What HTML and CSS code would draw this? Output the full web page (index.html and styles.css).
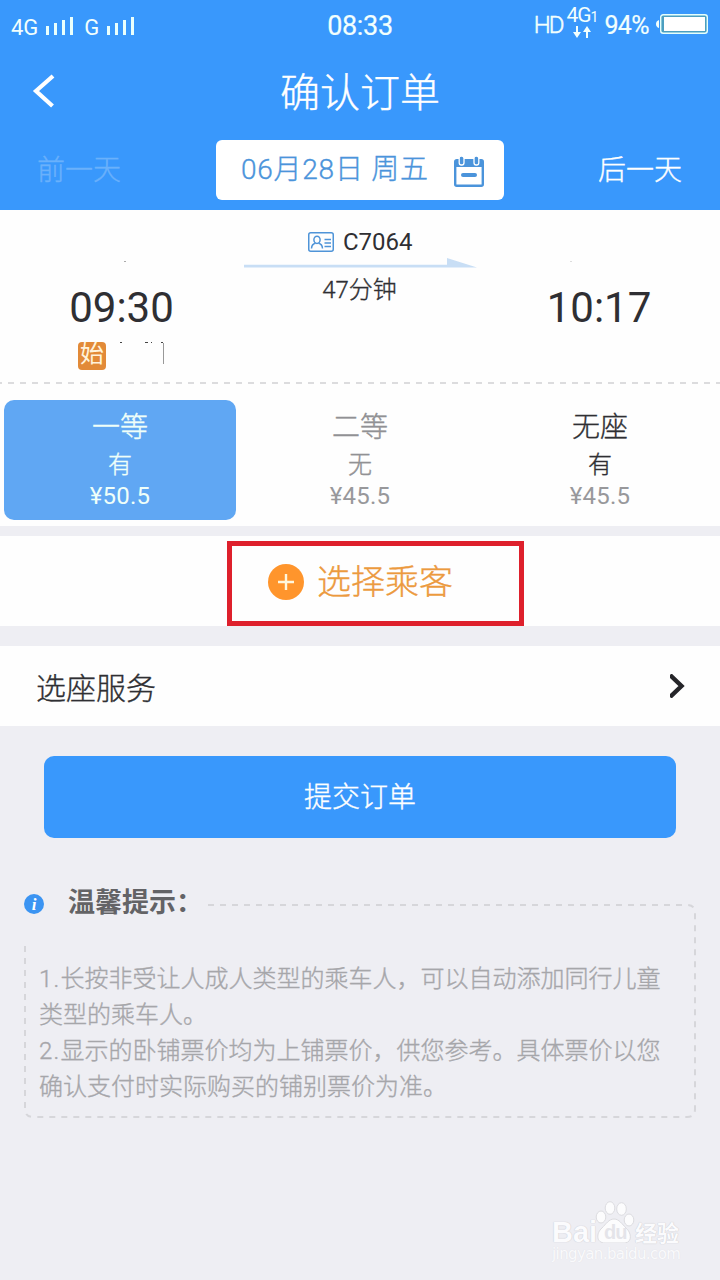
FILE: index.html
```html
<!DOCTYPE html>
<html lang="zh-CN">
<head>
<meta charset="utf-8">
<title>确认订单</title>
<link rel="stylesheet" href="styles.css">
</head>
<body>
<div class="screen">
  <header class="header">
    <div class="status">
      <div class="status-left">
        <span>4G</span>
        <svg class="signal" width="28" height="18" viewBox="0 0 28 18"><path d="M1.500 9v9M9.500 6v12M17.500 3v15M25.500 0v18"/></svg>
        <span class="net2">G</span>
        <svg class="signal" width="28" height="18" viewBox="0 0 28 18"><path d="M1.500 9v9M9.500 6v12M17.500 3v15M25.500 0v18"/></svg>
      </div>
      <div class="clock">08:33</div>
      <div class="status-right">
        <span class="hd">HD</span>
        <div class="data">
          <div class="data-label">4G<small>1</small></div>
          <svg width="20" height="13" viewBox="0 0 20 13"><path d="M5 0v7M15 12V5" stroke="#f2fffd" stroke-width="2"/><path d="M1 6h8l-4 6zM11 6h8l-4-6z" fill="#f2fffd"/></svg>
        </div>
        <span class="pct">94%</span>
        <svg class="battery" width="53" height="20" viewBox="0 0 53 20"><path d="M3 6v8q-3-1-3-4t3-4z" fill="#f2fffd"/><rect x="4.700" y=".7" width="46.600" height="18.600" rx="2.500" fill="#4b9fc0" stroke="#e5fffc" stroke-width="1.400"/><rect x="8" y="3" width="41" height="14" fill="#fff"/></svg>
      </div>
    </div>
    <div class="titlebar">
      <svg class="back" width="24" height="34" viewBox="0 0 24 34"><path d="M21 2L4 17l16.500 15" fill="none" stroke="#fff" stroke-width="4.200"/></svg>
      <h1>确认订单</h1>
    </div>
    <div class="dates">
      <div class="day prev">前一天</div>
      <div class="picker">
        <span>06月28日 周五</span>
        <svg width="30" height="30" viewBox="0 0 30 30"><rect x="1.200" y="3.200" width="27.600" height="25.600" rx="1.500" fill="#fff" stroke="#4b94db" stroke-width="2.400"/><path d="M1 3h28v7H1z" fill="#4b94db"/><rect x="5.200" y="-1" width="4.800" height="9" rx="2.200" fill="#4b94db" stroke="#fff" stroke-width="1.300"/><rect x="20" y="-1" width="4.800" height="9" rx="2.200" fill="#4b94db" stroke="#fff" stroke-width="1.300"/><path d="M9 18h12" stroke="#4b94db" stroke-width="4" stroke-linecap="round"/></svg>
      </div>
      <div class="day">后一天</div>
    </div>
  </header>

  <section class="trip">
    <div class="stop">
      <i class="speck"></i>
      <div class="time">09:30</div>
      <div class="origin">
        <span class="badge">始</span>
        <svg width="48" height="24" viewBox="0 0 48 24"><path d="M2 .5h2M27 .5h3M33 .5h1M43 .5h2" stroke="#444" stroke-width="1"/><path d="M45.500 1v21" stroke="#999"/></svg>
      </div>
    </div>
    <div class="route">
      <div class="train">
        <svg width="26" height="20" viewBox="0 0 26 20" fill="none" stroke="#4f94d8" stroke-width="1.500"><rect x=".75" y=".75" width="24.500" height="18.500" rx="2"/><ellipse cx="9" cy="7.800" rx="3.100" ry="3.600"/><path d="M3.500 16.500q.3-4.500 4-5.200M10.500 11.300q3.700.7 4 5.200M16.500 7.500H23M16.500 11H23M16.500 14.500H23"/></svg>
        <span>C7064</span>
      </div>
      <svg class="arrow" width="234" height="10" viewBox="0 0 234 10"><path d="M0 6.800h203V0l30 9.600H0z" fill="#c8def5"/></svg>
      <div class="duration">47分钟</div>
    </div>
    <div class="stop">
      <i class="speck faint"></i>
      <div class="time">10:17</div>
    </div>
  </section>
  <svg class="divider" width="720" height="2"><path d="M-4 1h728" stroke="#dcdcde" stroke-width="2" stroke-dasharray="6 6"/></svg>

  <section class="seats">
    <div class="seat selected"><b>一等</b><span>有</span><em>¥50.5</em></div>
    <div class="seat soldout"><b>二等</b><span>无</span><em>¥45.5</em></div>
    <div class="seat"><b>无座</b><span>有</span><em>¥45.5</em></div>
  </section>

  <section class="passenger">
    <div class="highlight">
      <svg width="36" height="36" viewBox="0 0 36 36"><circle cx="18" cy="18" r="18" fill="#ff952c"/><path d="M10 18h16M18 10v16" stroke="#fff7dd" stroke-width="2.400"/></svg>
      <span>选择乘客</span>
    </div>
  </section>

  <section class="service">
    <span>选座服务</span>
    <svg width="15" height="24" viewBox="0 0 15 24"><path d="M0 1l11.500 11L0 23" fill="none" stroke="#252529" stroke-width="4.400"/></svg>
  </section>

  <div class="submit">提交订单</div>

  <section class="tips">
    <svg class="tips-frame" width="672" height="214" viewBox="0 0 672 214" fill="none" stroke="#d6d6da" stroke-width="2" stroke-dasharray="6 6"><path d="M184 1h479q8 0 8 8v196q0 8-8 8H9q-8 0-8-8V38"/></svg>
    <div class="tips-head">
      <svg width="20" height="20" viewBox="0 0 20 20"><circle cx="10" cy="10" r="10" fill="#3b94f2"/><text x="10" y="15.500" text-anchor="middle" class="info">i</text></svg>
      <h2>温馨提示：</h2>
    </div>
    <p><span class="num">1.</span>长按非受让人成人类型的乘车人，可以自动添加同行儿童<br>类型的乘车人。</p>
    <p><span class="num">2.</span>显示的卧铺票价均为上铺票价，供您参考。具体票价以您<br>确认支付时实际购买的铺别票价为准。</p>
  </section>

  <div class="watermark">
    <div class="brand">
      <span class="latin">Bai</span>
      <div class="paw">
        <svg width="40" height="42" viewBox="0 0 40 42" fill="#fcfcfd" stroke="#dcdce0" stroke-width="1"><ellipse cx="6" cy="16" rx="4.800" ry="6"/><ellipse cx="15" cy="7" rx="4.800" ry="6.300"/><ellipse cx="26.500" cy="8" rx="4.800" ry="6.300"/><ellipse cx="34" cy="19" rx="4.800" ry="6"/><path d="M19 18c5 0 8 5 12 9 5 4 7 14-1 15H10c-9 0-9-10-3-15 4-4 7-9 12-9z"/></svg>
        <span class="du">du</span>
      </div>
      <span class="cjk">经验</span>
    </div>
    <div class="site">jingyan.baidu.com</div>
  </div>
</div>
</body>
</html>
```
FILE: styles.css
```css
* { box-sizing: border-box; }
body { margin: 0; font-family: Roboto, "Noto Sans CJK SC", sans-serif; color: #2f2f33; }
svg { display: block; flex: none; }
h1, h2, p { margin: 0; }
.screen { position: relative; width: 720px; height: 1280px; background: #eeeef3; overflow: hidden; }
h1, .day, .picker span, .duration, .seat b, .seat span, .highlight span, .service span, .submit, .tips p { font-weight: 300; -webkit-text-stroke: .35px currentColor; }

.header { height: 210px; background: #3998fc; color: #fff; }
.status { display: grid; grid-template-columns: 1fr auto 1fr; height: 52px; color: #f2fffd; }
.status-left { display: flex; align-items: flex-start; padding: 17px 0 0 11px; font-size: 22px; line-height: 20px; }
.status-left span { padding-top: 1px; }
.signal { margin-left: 8px; stroke: #e9fffc; stroke-width: 3; }
.net2 { margin-left: 10px; }
.clock { font-size: 27px; line-height: 52px; letter-spacing: -.3px; -webkit-text-stroke: .2px currentColor; }
.status-right { display: flex; justify-content: flex-end; padding-right: 11px; }
.hd { font-size: 24px; line-height: 50px; letter-spacing: -2px; font-weight: 300; -webkit-text-stroke: .5px currentColor; }
.data { width: 34px; padding-top: 7px; margin-left: 4px; font-size: 21px; line-height: 17px; letter-spacing: -1px; }
.data-label { white-space: nowrap; }
.data small { font-size: 14px; }
.data svg { margin: 0 0 0 6px; }
.pct { margin-left: 4px; font-size: 25px; line-height: 51px; letter-spacing: -.6px; -webkit-text-stroke: .2px currentColor; }
.battery { margin: 14px 0 0 7px; }

.titlebar { display: grid; grid-template-columns: 1fr auto 1fr; height: 88px; align-items: center; }
.back { margin: -10px 0 0 32px; }
h1 { font-size: 40px; line-height: 60px; margin-top: -5px; }
.dates { display: grid; grid-template: 60px / 1fr 288px 1fr; }
.day { font-size: 28px; line-height: 62px; text-align: center; padding-left: 56px; }
.prev { color: #80bcfb; padding: 0 58px 0 0; opacity: .7; }
.picker { display: flex; align-items: center; justify-content: space-between; padding: 0 20px 0 25px; background: #fff; border-radius: 6px; color: #4b94db; font-size: 28px; white-space: pre; }
.picker span { line-height: 56px; margin-top: 0; letter-spacing: .75px; }
.picker svg { margin-top: 3px; overflow: visible; }

.trip { display: grid; grid-template-columns: 243px 1fr 242px; height: 172px; background: #fefefe; }
.stop { display: flex; flex-direction: column; align-items: center; padding-top: 51px; }
.speck { width: 2px; height: 1px; margin-left: 6px; background: #aaa; }
.speck.faint { margin-left: -56px; background: #ddd; }
.time { font-size: 42px; line-height: 50px; margin-top: 21px; }
.origin { display: flex; width: 87px; margin-top: 9px; gap: 12px; }
.badge { width: 28px; height: 28px; border-radius: 4px; background: #e28a38; color: #fff3dc; font-size: 24px; line-height: 25px; text-align: center; flex: none; }
.route { padding-top: 16px; }
.train { display: flex; align-items: center; gap: 9px; height: 32px; padding-left: 65px; font-size: 24px; }
.arrow { margin-left: 1px; }
.duration { text-align: center; font-size: 24px; line-height: 32px; margin: 6px 2px 0 0; }
.divider { background: #fefefe; }

.seats { display: grid; grid-template-columns: repeat(3, 1fr); column-gap: 8px; padding: 16px 4px 6px; height: 142px; background: #fefefe; }
.seat { display: flex; flex-direction: column; align-items: center; height: 120px; border-radius: 10px; }
.seat b { font-size: 28px; line-height: 42px; margin-top: 7px; }
.seat span { font-size: 24px; line-height: 32px; }
.seat em { font-style: normal; font-size: 24px; line-height: 32px; color: #98989b; letter-spacing: .2px; margin-top: -1px; }
.seat.soldout { color: #919194; }
.seat.selected, .seat.selected em { background: #60a7f3; color: #effff9; }

.passenger { display: flex; justify-content: center; margin-top: 10px; padding: 5px 0 0 31px; height: 90px; background: #fefefe; }
.highlight { display: flex; align-items: center; width: 297px; height: 85px; padding-left: 36px; gap: 13px; border: 5px solid #de202c; color: #ec9a3e; font-size: 34px; }
.highlight span { line-height: 50px; margin-top: -4px; }
.highlight svg { margin-top: -3px; }

.service { display: flex; align-items: center; justify-content: space-between; height: 80px; margin-top: 20px; padding: 0 35px 0 36px; background: #fefefe; font-size: 30px; }
.submit { height: 82px; margin: 30px 44px 0; border-radius: 10px; background: #3998fc; color: #fff; font-size: 28px; line-height: 83px; text-align: center; }

.tips { position: relative; margin: 44px 24px 0; height: 236px; color: #a6a6aa; }
.tips-frame { position: absolute; left: 0; top: 22px; }
.tips-head { display: flex; align-items: center; gap: 24px; height: 40px; }
.tips-head svg { margin-top: 4px; }
h2 { font-size: 27px; line-height: 38px; margin-top: 2px; color: #636366; font-weight: 700; }
.info { font: italic bold 17px "Liberation Serif", serif; fill: #fff; }
.tips-head + p { padding-top: 39px; }
.tips p { padding-left: 15px; font-size: 24px; line-height: 36px; white-space: nowrap; }
.num { letter-spacing: 1.2px; }

.watermark { position: absolute; left: 552px; top: 1201px; width: 135px; color: #fbfbfd; text-shadow: 0 0 1px #c8c8cf, 0 0 1px #d4d4d9; }
.brand { display: flex; align-items: flex-end; height: 43px; font: bold 29px/30px "Liberation Sans", "Noto Sans CJK SC", sans-serif; }
.latin { width: 43px; margin-bottom: -3px; }
.paw { position: relative; width: 40px; height: 43px; }
.du { position: absolute; left: 9px; top: 21px; font-size: 20px; line-height: 20px; letter-spacing: -1px; color: #e4e4e9; text-shadow: none; }
.cjk { font-family: "Noto Sans CJK SC", sans-serif; font-size: 22px; margin-bottom: -2px; }
.site { font: 15px/20px "DejaVu Sans", sans-serif; color: #fafafc; letter-spacing: -.6px; text-shadow: 0 0 1px #dcdce1; }
```
